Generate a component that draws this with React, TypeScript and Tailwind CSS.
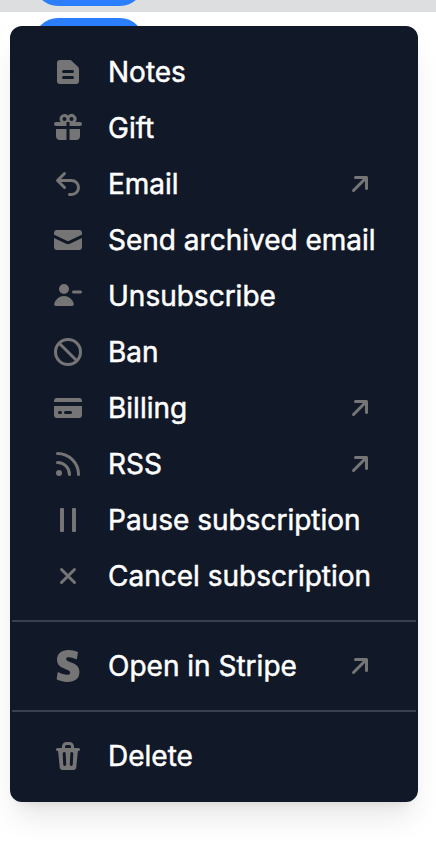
import type { ReactNode } from 'react';

interface MenuItem {
  label: string;
  icon: ReactNode;
  external?: boolean;
}

interface IconProps {
  children: ReactNode;
  viewBox?: string;
}

function Icon({ children, viewBox = '0 0 16 16' }: IconProps) {
  return (
    <svg
      viewBox={viewBox}
      fill="currentColor"
      fillRule="evenodd"
      clipRule="evenodd"
      className="size-8 shrink-0 text-[#757575]"
      aria-hidden="true"
    >
      {children}
    </svg>
  );
}

const NotesIcon = (
  <Icon>
    <path d="M4 2a1.5 1.5 0 0 0-1.5 1.5v9A1.5 1.5 0 0 0 4 14h8a1.5 1.5 0 0 0 1.5-1.5V6.621a1.5 1.5 0 0 0-.44-1.06L9.94 2.439A1.5 1.5 0 0 0 8.878 2H4Zm1 5.75A.75.75 0 0 1 5.75 7h4.5a.75.75 0 0 1 0 1.5h-4.5A.75.75 0 0 1 5 7.75Zm0 3a.75.75 0 0 1 .75-.75h4.5a.75.75 0 0 1 0 1.5h-4.5a.75.75 0 0 1-.75-.75Z" />
  </Icon>
);

const GiftIcon = (
  <Icon>
    <path d="M3.75 3.5c0 .563.186 1.082.5 1.5H2a1 1 0 0 0 0 2h5.25V5h1.5v2H14a1 1 0 1 0 0-2h-2.25A2.5 2.5 0 0 0 8 1.714 2.5 2.5 0 0 0 3.75 3.5Zm3.499 0a1 1 0 1 0-2 0 1 1 0 0 0 2 0Zm3.5 0a1 1 0 1 0-2 0 1 1 0 0 0 2 0Z" />
    <path d="M7.25 8.5H2V12a2 2 0 0 0 2 2h3.25V8.5ZM8.75 14V8.5H14V12a2 2 0 0 1-2 2H8.75Z" />
  </Icon>
);

const ReplyIcon = (
  <Icon>
    <path d="M12.5 9.75A2.75 2.75 0 0 0 9.75 7H4.56l2.22 2.22a.75.75 0 1 1-1.06 1.06l-3.5-3.5a.75.75 0 0 1 0-1.06l3.5-3.5a.75.75 0 0 1 1.06 1.06L4.56 5.5h5.19a4.25 4.25 0 0 1 0 8.5h-1a.75.75 0 0 1 0-1.5h1a2.75 2.75 0 0 0 2.75-2.75Z" />
  </Icon>
);

const EnvelopeIcon = (
  <Icon>
    <path d="M2.5 3A1.5 1.5 0 0 0 1 4.5v.793c.026.009.051.02.076.032L7.674 8.51c.206.1.446.1.652 0l6.598-3.185A.755.755 0 0 1 15 5.293V4.5A1.5 1.5 0 0 0 13.5 3h-11Z" />
    <path d="M15 6.954 8.978 9.86a2.25 2.25 0 0 1-1.956 0L1 6.954V11.5A1.5 1.5 0 0 0 2.5 13h11a1.5 1.5 0 0 0 1.5-1.5V6.954Z" />
  </Icon>
);

const UserMinusIcon = (
  <Icon>
    <path d="M8.5 4.5a2.5 2.5 0 1 1-5 0 2.5 2.5 0 0 1 5 0ZM10.9 12.006c.11.542-.348.994-.9.994H2c-.553 0-1.01-.452-.902-.994a5.002 5.002 0 0 1 9.803 0ZM10.75 5.25a.75.75 0 0 0 0 1.5h3.5a.75.75 0 0 0 0-1.5h-3.5Z" />
  </Icon>
);

const BanIcon = (
  <Icon>
    <g fill="none" stroke="currentColor" strokeWidth="1.5">
      <circle cx="8" cy="8" r="6.25" />
      <path d="m3.6 3.6 8.8 8.8" />
    </g>
  </Icon>
);

const CardIcon = (
  <Icon>
    <path d="M2.5 3A1.5 1.5 0 0 0 1 4.5V5h14v-.5A1.5 1.5 0 0 0 13.5 3h-11Z" />
    <path d="M15 7H1v4.5A1.5 1.5 0 0 0 2.5 13h11a1.5 1.5 0 0 0 1.5-1.5V7ZM3 10.25a.75.75 0 0 1 .75-.75h.5a.75.75 0 0 1 0 1.5h-.5a.75.75 0 0 1-.75-.75Zm3.75-.75a.75.75 0 0 0 0 1.5h2.5a.75.75 0 0 0 0-1.5h-2.5Z" />
  </Icon>
);

const RssIcon = (
  <Icon>
    <circle cx="3.5" cy="12.5" r="1.5" />
    <g fill="none" stroke="currentColor" strokeWidth="1.5" strokeLinecap="round">
      <path d="M2.75 2.75a10.5 10.5 0 0 1 10.5 10.5" />
      <path d="M2.75 7.25a6 6 0 0 1 6 6" />
    </g>
  </Icon>
);

const PauseIcon = (
  <Icon>
    <rect x="4" y="2" width="2" height="12" rx="0.5" />
    <rect x="10" y="2" width="2" height="12" rx="0.5" />
  </Icon>
);

const CancelIcon = (
  <Icon>
    <path
      d="m4.75 4.75 6.5 6.5m0-6.5-6.5 6.5"
      stroke="currentColor"
      strokeWidth="1.5"
      strokeLinecap="round"
    />
  </Icon>
);

const StripeIcon = (
  <Icon viewBox="0 0 24 24">
    <path d="M13.976 9.15c-2.172-.806-3.356-1.426-3.356-2.409 0-.831.683-1.305 1.901-1.305 2.227 0 4.515.858 6.09 1.631l.89-5.494C18.252.975 15.697 0 12.165 0 9.667 0 7.589.654 6.104 1.872 4.56 3.147 3.757 4.992 3.757 7.218c0 4.039 2.467 5.76 6.476 7.219 2.585.92 3.445 1.574 3.445 2.583 0 .98-.84 1.545-2.354 1.545-1.875 0-4.965-.921-6.99-2.109l-.9 5.555C5.175 22.99 8.385 24 11.714 24c2.641 0 4.843-.624 6.328-1.813 1.664-1.305 2.525-3.236 2.525-5.732 0-4.128-2.524-5.851-6.594-7.305h.003z" />
  </Icon>
);

const TrashIcon = (
  <Icon>
    <path d="M5 3.25V4H2.75a.75.75 0 0 0 0 1.5h.3l.815 8.15A1.5 1.5 0 0 0 5.357 15h5.285a1.5 1.5 0 0 0 1.493-1.35l.815-8.15h.3a.75.75 0 0 0 0-1.5H11v-.75A2.25 2.25 0 0 0 8.75 1h-1.5A2.25 2.25 0 0 0 5 3.25Zm2.25-.75a.75.75 0 0 0-.75.75V4h3v-.75a.75.75 0 0 0-.75-.75h-1.5ZM6.05 6a.75.75 0 0 1 .787.713l.275 5.5a.75.75 0 0 1-1.498.075l-.275-5.5A.75.75 0 0 1 6.05 6Zm3.9 0a.75.75 0 0 1 .712.787l-.275 5.5a.75.75 0 0 1-1.498-.075l.275-5.5a.75.75 0 0 1 .786-.711Z" />
  </Icon>
);

const ExternalIcon = (
  <Icon>
    <path d="M4.22 11.78a.75.75 0 0 1 0-1.06L9.44 5.5H5.75a.75.75 0 0 1 0-1.5h5.5a.75.75 0 0 1 .75.75v5.5a.75.75 0 0 1-1.5 0V6.56l-5.22 5.22a.75.75 0 0 1-1.06 0Z" />
  </Icon>
);

const SECTIONS: MenuItem[][] = [
  [
    { label: 'Notes', icon: NotesIcon },
    { label: 'Gift', icon: GiftIcon },
    { label: 'Email', icon: ReplyIcon, external: true },
    { label: 'Send archived email', icon: EnvelopeIcon },
    { label: 'Unsubscribe', icon: UserMinusIcon },
    { label: 'Ban', icon: BanIcon },
    { label: 'Billing', icon: CardIcon, external: true },
    { label: 'RSS', icon: RssIcon, external: true },
    { label: 'Pause subscription', icon: PauseIcon },
    { label: 'Cancel subscription', icon: CancelIcon },
  ],
  [{ label: 'Open in Stripe', icon: StripeIcon, external: true }],
  [{ label: 'Delete', icon: TrashIcon }],
];

function MenuRow({ label, icon, external }: MenuItem) {
  return (
    <button
      type="button"
      role="menuitem"
      className="flex h-14 w-full items-center pr-10 pl-10 text-left"
    >
      {icon}
      <span className="ml-6 flex-1 whitespace-nowrap text-[28px] leading-10 text-white [-webkit-text-stroke:0.5px_white]">
        {label}
      </span>
      {external && ExternalIcon}
    </button>
  );
}

export default function App() {
  return (
    <div className="relative h-[862px] w-[436px] overflow-hidden bg-white font-['Inter',sans-serif]">
      {/* table rows behind the menu, only their pills peek out */}
      <div className="flex h-3 items-end bg-[#dddee0] pb-1.5 pl-[34px]">
        <div className="h-12 w-[110px] shrink-0 rounded-full bg-[#2b7fff]" />
      </div>
      <div className="pt-1.5 pl-[34px]">
        <div className="h-12 w-[110px] rounded-full bg-[#2b7fff]" />
      </div>

      <div
        role="menu"
        className="absolute top-[26px] left-2.5 w-[408px] divide-y-2 divide-[#374151] rounded-xl border-2 border-[#111827] bg-[#111827] shadow-[0_20px_30px_-6px_rgba(0,0,0,0.1),0_8px_12px_-8px_rgba(0,0,0,0.1)]"
      >
        {SECTIONS.map((items) => (
          <div key={items[0].label} className="py-4">
            {items.map((item) => (
              <MenuRow key={item.label} {...item} />
            ))}
          </div>
        ))}
      </div>
    </div>
  );
}
